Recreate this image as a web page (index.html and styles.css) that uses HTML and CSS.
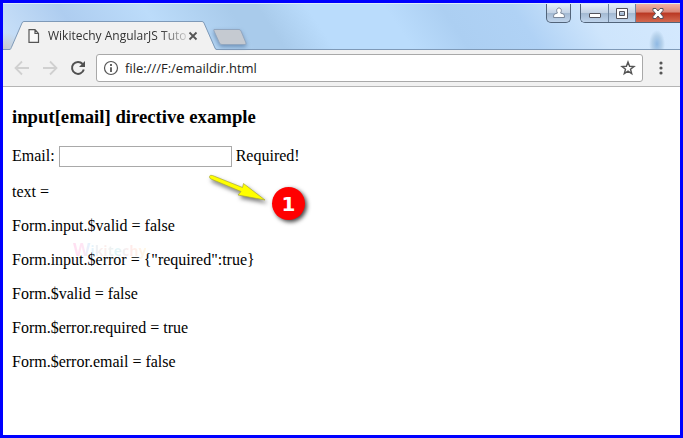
FILE: index.html
```html
<!DOCTYPE html>
<html lang="en">
<head>
<meta charset="utf-8">
<title>Wikitechy AngularJS Tutorial</title>
<link rel="stylesheet" href="styles.css">
</head>
<body>
<div class="window">
  <header class="titlebar">
    <div class="tab">
      <svg class="tab-shape" viewBox="0 0 208 29" preserveAspectRatio="none" aria-hidden="true">
        <path d="M0 29 C2 29 2 27 3 25 L13 2 Q13.500 .5 15 .5 L193 .5 Q194.500 .5 195 2 L206 28 L208 29Z" fill="#f1f1f1"/>
        <path d="M0 28.500 C2 28.500 2 27 3 25 L13 2 Q13.500 .5 15 .5 L193 .5 Q194.500 .5 195 2 L206 27 Q206.500 28.500 208 28.500" fill="none" stroke="#7f9ab8"/>
      </svg>
      <svg class="page-icon" width="12" height="14" viewBox="0 0 12 14" aria-hidden="true"><path d="M1 .7H7L10.500 4.500V13.300H1Z M7 .7V4.500H10.500" fill="#fafafa" stroke="#555" stroke-width="1.200"/></svg>
      <span class="tab-title">Wikitechy AngularJS Tuto</span>
      <button class="plain" aria-label="Close tab"><svg width="10" height="10" viewBox="0 0 10 10"><path d="M1.500 1.500L8.500 8.500M8.500 1.500L1.500 8.500" stroke="#555" stroke-width="1.800"/></svg></button>
    </div>
    <button class="plain new-tab" aria-label="New tab"><svg width="36" height="20" viewBox="0 0 36 20"><path d="M2 1.500H27Q28.500 1.500 29 3L34 15Q34.500 16.500 33 16.500H10Q8 16.500 7.500 15L2 3Q1.500 1.500 2 1.500Z" fill="#c5cad1" stroke="#93a7bf"/></svg></button>
    <div class="controls">
      <button class="control user" aria-label="Profile"><svg width="12" height="12" viewBox="0 0 12 12"><path d="M6 1C8.500 1 9 4 7.500 6L10.500 7Q11.500 7.500 11.500 10.500H.5Q.5 7.500 1.500 7L4.500 6C3 4 3.500 1 6 1Z" fill="#fff" stroke="#7a8698"/></svg></button>
      <div class="control-group">
        <button class="control min" aria-label="Minimize"><svg width="12" height="5" viewBox="0 0 12 5"><rect x=".5" y=".5" width="11" height="4" rx=".5" fill="#fff" stroke="#53535c"/></svg></button>
        <button class="control max" aria-label="Maximize"><svg width="12" height="11" viewBox="0 0 12 11"><path fill-rule="evenodd" d="M.5 .5H11.500V10.500H.5Z M3.500 3.500V7.500H8.500V3.500Z" fill="#fff" stroke="#53535c"/></svg></button>
        <button class="control close" aria-label="Close"><svg width="12" height="11" viewBox="0 0 12 11"><path d="M1 .5H4L6 3L8 .5H11V2.500L8.500 5.500L11 8.500V10.500H8L6 8L4 10.500H1V8.500L3.500 5.500L1 2.500Z" fill="#fff" stroke="#53535c"/></svg></button>
      </div>
    </div>
  </header>
  <nav class="toolbar" aria-label="Browser">
    <button class="plain nav-button" aria-label="Back"><svg width="16" height="16" viewBox="0 0 16 16"><path d="M15 8H2M8 1.500L1.500 8L8 14.500" fill="none" stroke="#d0d0d0" stroke-width="1.800"/></svg></button>
    <button class="plain nav-button" aria-label="Forward"><svg width="16" height="16" viewBox="0 0 16 16"><path d="M1 8H14M8 1.500L14.500 8L8 14.500" fill="none" stroke="#d0d0d0" stroke-width="1.800"/></svg></button>
    <button class="plain nav-button" aria-label="Reload"><svg width="16" height="16" viewBox="0 0 16 16"><path d="M12.600 4A6 6 0 1 0 13.800 9.500" fill="none" stroke="#505050" stroke-width="2"/><path d="M15 1V7H9Z" fill="#505050"/></svg></button>
    <div class="omnibox">
      <svg width="16" height="16" viewBox="0 0 16 16" aria-hidden="true"><circle cx="8" cy="8" r="6.500" fill="none" stroke="#555" stroke-width="1.200"/><path d="M8 4V6M8 7.200V12" stroke="#555" stroke-width="1.800"/></svg>
      <input class="address" type="text" aria-label="Address" value="file:///F:/emaildir.html">
      <button class="plain" aria-label="Bookmark"><svg width="16" height="16" viewBox="0 0 16 16"><path d="M8 2L9.600 6.300L14 6.500L10.500 9.300L11.700 13.600L8 11.200L4.300 13.600L5.500 9.300L2 6.500L6.400 6.300Z" fill="none" stroke="#555" stroke-width="1.400"/></svg></button>
    </div>
    <button class="plain menu" aria-label="Menu"><svg width="4" height="14" viewBox="0 0 4 14"><g fill="#555"><circle cx="2" cy="2" r="1.600"/><circle cx="2" cy="7" r="1.600"/><circle cx="2" cy="12" r="1.600"/></g></svg></button>
  </nav>
  <main class="page">
    <h3>input[email] directive example</h3>
    <form class="email-row">
      <label for="email">Email:</label>
      <input id="email" type="email" required>
      <span>Required!</span>
      <svg class="arrow" width="64" height="38" viewBox="0 0 64 38" aria-hidden="true"><path d="M3.500 4.500Q4 2.500 6.500 3.500L36.500 15.500L37.500 11.500L59 28L32 23L35 19.500L5 7Q3.500 6.500 3.500 4.500Z" fill="#ff0" stroke="#a8a838" stroke-width=".7"/></svg>
      <span class="marker">1</span>
    </form>
    <p>text =</p>
    <p>Form.input.$valid = false</p>
    <p class="error-line">Form.input.$error = {"required":true}<span class="watermark"><span class="initial">W</span>ikitechy</span></p>
    <p>Form.$valid = false</p>
    <p>Form.$error.required = true</p>
    <p>Form.$error.email = false</p>
  </main>
</div>
</body>
</html>
```
FILE: styles.css
```css
* { box-sizing: border-box; }
body { margin: 0; }
.window {
  min-height: 100vh;
  border: 3px solid #00f;
  background: #fff;
}
.plain {
  display: flex;
  align-items: center;
  justify-content: center;
  padding: 0;
  border: 0;
  background: none;
}
.titlebar {
  display: flex;
  align-items: flex-end;
  height: 47px;
  padding-left: 6px;
  border-top: 1px solid #dcebfa;
  background:
    linear-gradient(#7f9ab8, #7f9ab8) 0 100% / 100% 1px no-repeat,
    radial-gradient(ellipse 8px 14px at 654px 40px, #8fb9e4 0, #b4d0ea 60%, transparent 100%),
    radial-gradient(ellipse 22px 18px at 0 100%, #c5c8c9 0, transparent 100%),
    linear-gradient(56deg, #cce2f9 0%, #aecdf0 12%, #bcdcfa 24%, #a9cbeb 36%, #a9cbeb 40%, #badcfc 47%, #badcfc 58%, #accff2 66%, #b0d2f5 76%, #cee5fc 86%, #d5e9fe 100%);
}
.tab {
  position: relative;
  display: flex;
  align-items: center;
  width: 208px;
  height: 29px;
  padding: 0 19px;
}
.tab-shape {
  position: absolute;
  inset: 0;
  width: 100%;
  height: 100%;
}
.tab .page-icon, .tab-title, .tab .plain { position: relative; }
.page-icon { flex: none; margin-right: 8px; }
.tab-title {
  flex: 1;
  overflow: hidden;
  white-space: nowrap;
  color: #333;
  font: 12px/18px "Open Sans", sans-serif;
  -webkit-mask-image: linear-gradient(to right, #000 80%, #0002);
  mask-image: linear-gradient(to right, #000 80%, #0002);
}
.new-tab {
  margin: 0 0 2px -5px;
  filter: drop-shadow(0 2px 2px #6d91b8);
}
.controls {
  display: flex;
  align-self: flex-start;
  gap: 9px;
  margin-left: auto;
}
.control {
  display: flex;
  align-items: center;
  justify-content: center;
  height: 19px;
  padding: 0;
  border: 0;
  background: linear-gradient(#e3eefa 0, #c4d3e5 48%, #a2b8d1 50%, #bfd4ec 100%);
}
.control-group {
  display: flex;
  overflow: hidden;
  border: 1px solid #52647a;
  border-width: 0 0 1px 1px;
  border-radius: 0 0 0 5px;
}
.control-group .control { height: 18px; border-right: 1px solid #6f849e; }
.control.user { width: 25px; border: 1px solid #52647a; border-top: 0; border-radius: 0 0 5px 5px; }
.control.min { width: 28px; padding-top: 5px; }
.control.max { width: 27px; }
.control-group .control.close {
  width: 44px;
  border: 0;
  background: linear-gradient(#eeb2a7 0, #d98575 45%, #b93722 50%, #d36950 100%);
}
.toolbar {
  display: flex;
  align-items: center;
  gap: 12px;
  height: 37px;
  padding: 0 17px 0 11px;
  border-bottom: 1px solid #b5b5b5;
  background: #f1f1f1;
}
.omnibox {
  display: flex;
  flex: 1;
  align-items: center;
  gap: 6px;
  min-width: 0;
  height: 28px;
  margin: 0 4px 0 -2px;
  padding: 0 6px;
  border: 1px solid #a9a9a9;
  border-radius: 3px;
  background: #fff;
}
.address {
  flex: 1;
  min-width: 0;
  padding: 0;
  border: 0;
  outline: 0;
  background: none;
  color: #222;
  font: 13px/20px "Open Sans", sans-serif;
}
.page {
  padding: 20px 9px;
  color: #000;
  font: 16px/18px "Liberation Serif", serif;
}
h3 {
  margin: 0 0 19px;
  line-height: 20px;
}
.email-row {
  position: relative;
  display: flex;
  gap: 4px;
  height: 21px;
}
#email {
  width: 173px;
  height: 21px;
  border: 1px solid #a9a9a9;
  background: #fff;
}
p { margin: 16px 0 0; }
.arrow {
  position: absolute;
  top: 26px;
  left: 194px;
  filter: drop-shadow(2px 3px 2px #777);
}
.marker {
  position: absolute;
  top: 41px;
  left: 260px;
  width: 33px;
  height: 33px;
  border-radius: 50%;
  background: #f00;
  box-shadow: 2px 2px 4px #444;
  color: #fff;
  font: bold 20px/34px "DejaVu Sans", sans-serif;
  text-align: center;
}
.email-row label, .email-row > span:not(.marker) { line-height: 20px; }
.error-line { position: relative; }
.watermark {
  position: absolute;
  top: -12px;
  left: 61px;
  background: linear-gradient(to right, #f6b, #f8c 14%, #6cf 24%, #fa9 42%, #6cd 60%, #f99 78%, #fd8);
  -webkit-background-clip: text;
  background-clip: text;
  color: transparent;
  opacity: .2;
  font: bold 14px/20px "Open Sans", sans-serif;
}
.initial { font-size: 18px; }
```
